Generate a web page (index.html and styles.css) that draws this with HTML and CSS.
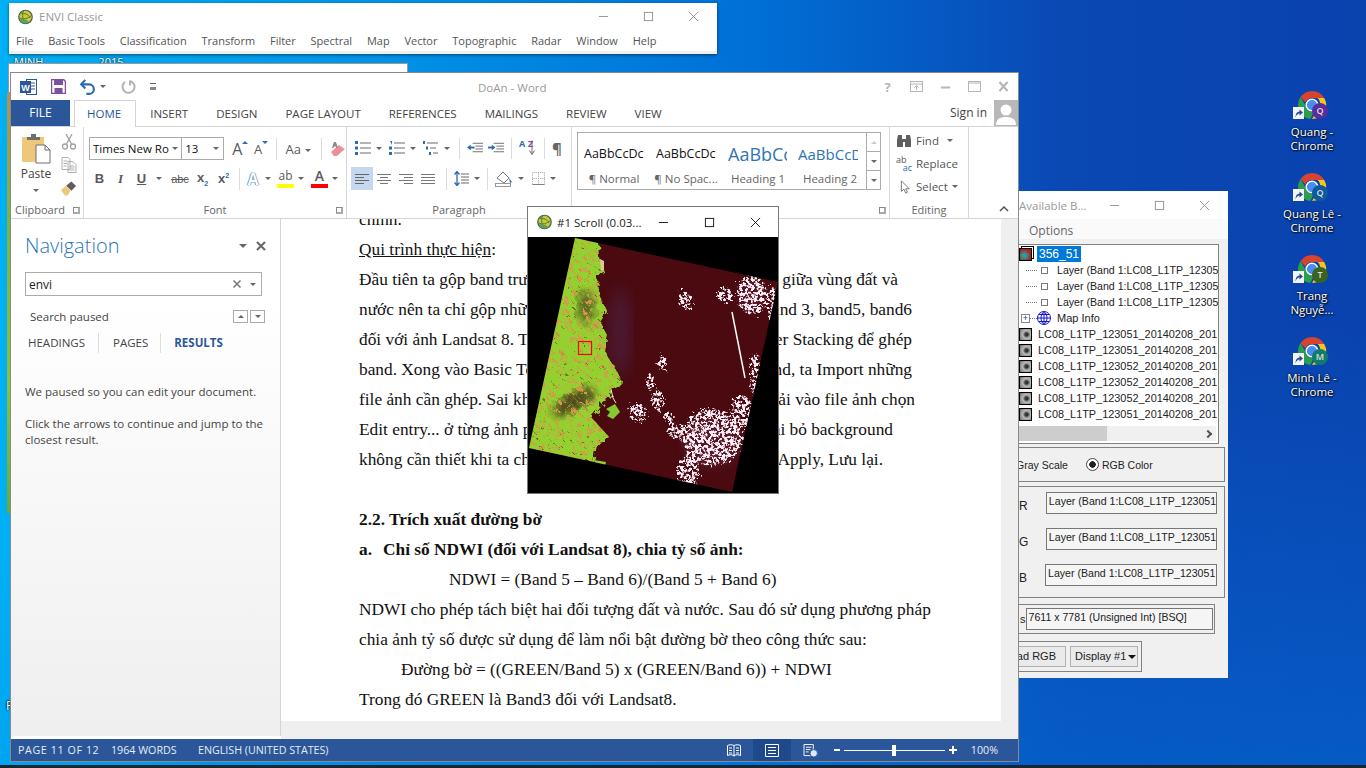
FILE: index.html
```html
<!DOCTYPE html>
<html lang="vi">
<head>
    <meta charset="UTF-8">
    <title>DoAn - Word</title>
    <link rel="stylesheet" href="styles.css">
</head>
<body>
    <svg class="defs" width="0" height="0">
        <defs>
            <symbol id="envi" viewBox="0 0 16 16">
                <circle cx="8" cy="8" r="7.2" fill="#d8c42e" stroke="#3f6a55" stroke-width="1.3"/>
                <path d="M1.5 9c4 2 9 1 13-3M6 1.5c-2 4-1 10 2 13M3 4c4 0 8 1 10 5" fill="none" stroke="#2f7d4c" stroke-width="1"/>
                <path d="M2 10a6.5 6.5 0 0 0 10 3.500l-3-2.500z" fill="#5fa05a"/>
            </symbol>
            <symbol id="chrome" viewBox="0 0 32 32">
                <path d="M16 1a15 15 0 0 1 13 7.500H16a7.500 7.500 0 0 0-7 4.800L3.800 7.500A15 15 0 0 1 16 1z" fill="#d8432f"/>
                <path d="M29 8.500A15 15 0 0 1 16 31l6.500-11.300A7.500 7.500 0 0 0 22 8.500z" fill="#f5c51e"/>
                <path d="M3.800 7.500l6.500 11.300a7.500 7.500 0 0 0 7.600 4.600L14.200 31A15 15 0 0 1 3.800 7.500z" fill="#2c9e4b"/>
                <circle cx="16" cy="16" r="6.200" fill="#4a8df0" stroke="#fff" stroke-width="1.500"/>
            </symbol>
            <symbol id="shortcut" viewBox="0 0 11 12">
                <rect width="11" height="12" fill="#f4f4f4"/>
                <path d="M2.500 10.500c0-4 1.500-6 4-6V2.500L10 5.500l-3.500 3V6.500c-1.500 0-3 1-4 4z" fill="#1f4f8f"/>
            </symbol>
        </defs>
    </svg>

    <div class="behind-text"><span>MINH</span><span>2015</span></div>
    <div class="behind-window"></div>
    <div class="sliver"></div>
    <div class="stray-p">P</div>

    <div class="window envi-main">
        <div class="win-title">
            <svg class="app-ico"><use href="#envi"/></svg>
            <span class="grey-title">ENVI Classic</span>
            <div class="win-btns grey">
                <svg viewBox="0 0 12 12"><path d="M1 6h10" stroke="currentColor"/></svg>
                <svg viewBox="0 0 12 12"><rect x="1.500" y="1.500" width="9" height="9" fill="none" stroke="currentColor"/></svg>
                <svg viewBox="0 0 12 12"><path d="M1 1l10 10M11 1L1 11" stroke="currentColor"/></svg>
            </div>
        </div>
        <div class="envi-menu">
            <span>File</span><span>Basic Tools</span><span>Classification</span><span>Transform</span><span>Filter</span><span>Spectral</span><span>Map</span><span>Vector</span><span>Topographic</span><span>Radar</span><span>Window</span><span>Help</span>
        </div>
    </div>

    <div class="desktop-icons">
        <div class="dicon">
            <div class="dicon-art"><svg class="chrome"><use href="#chrome"/></svg><svg class="short"><use href="#shortcut"/></svg><span class="badge purple">Q</span></div>
            <div class="dicon-label">Quang -<br>Chrome</div>
        </div>
        <div class="dicon">
            <div class="dicon-art"><svg class="chrome"><use href="#chrome"/></svg><svg class="short"><use href="#shortcut"/></svg><span class="badge navy">Q</span></div>
            <div class="dicon-label">Quang Lê -<br>Chrome</div>
        </div>
        <div class="dicon">
            <div class="dicon-art"><svg class="chrome"><use href="#chrome"/></svg><svg class="short"><use href="#shortcut"/></svg><span class="badge olive">T</span></div>
            <div class="dicon-label">Trang<br>Nguyễ...</div>
        </div>
        <div class="dicon">
            <div class="dicon-art"><svg class="chrome"><use href="#chrome"/></svg><svg class="short"><use href="#shortcut"/></svg><span class="badge teal">M</span></div>
            <div class="dicon-label">Minh Lê -<br>Chrome</div>
        </div>
    </div>

    <!-- Available Bands List -->
    <div class="window bands">
        <div class="bands-title">
            <span class="grey-title">Available B...</span>
            <div class="win-btns grey">
                <svg viewBox="0 0 12 12"><path d="M1 6h10" stroke="currentColor"/></svg>
                <svg viewBox="0 0 12 12"><rect x="1.500" y="1.500" width="9" height="9" fill="none" stroke="currentColor"/></svg>
                <svg viewBox="0 0 12 12"><path d="M1 1l10 10M11 1L1 11" stroke="currentColor"/></svg>
            </div>
        </div>
        <div class="bands-menu">Options</div>
        <div class="tree">
            <div class="tree-rows">
                <div class="t-row root"><span class="thumb color"></span><span class="sel">356_51</span></div>
                <div class="t-row sub"><span class="dots"></span><span class="sq"></span><span>Layer (Band 1:LC08_L1TP_12305</span></div>
                <div class="t-row sub"><span class="dots"></span><span class="sq"></span><span>Layer (Band 1:LC08_L1TP_12305</span></div>
                <div class="t-row sub"><span class="dots"></span><span class="sq"></span><span>Layer (Band 1:LC08_L1TP_12305</span></div>
                <div class="t-row info"><span class="plus">+</span><span class="dots short-dots"></span>
                    <svg class="globe" viewBox="0 0 14 14"><circle cx="7" cy="7" r="6.500" fill="#fff" stroke="#1414d0"/><path d="M.5 7h13M7 .5v13M2 3.500h10M2 10.500h10M7 .5c-4 3-4 10 0 13M7 .5c4 3 4 10 0 13" fill="none" stroke="#1414d0"/></svg>
                    <span>Map Info</span></div>
                <div class="t-row lc"><span class="thumb"></span><span>LC08_L1TP_123051_20140208_201</span></div>
                <div class="t-row lc"><span class="thumb"></span><span>LC08_L1TP_123051_20140208_201</span></div>
                <div class="t-row lc"><span class="thumb"></span><span>LC08_L1TP_123052_20140208_201</span></div>
                <div class="t-row lc"><span class="thumb"></span><span>LC08_L1TP_123052_20140208_201</span></div>
                <div class="t-row lc"><span class="thumb"></span><span>LC08_L1TP_123052_20140208_201</span></div>
                <div class="t-row lc"><span class="thumb"></span><span>LC08_L1TP_123051_20140208_201</span></div>
            </div>
            <div class="hscroll"><div class="hthumb"></div><span class="harrow"></span></div>
        </div>
        <div class="group mode">
            <span class="gray-opt">Gray Scale</span>
            <span class="radio"></span>
            <span>RGB Color</span>
        </div>
        <div class="group rgb">
            <div class="rgb-row"><span class="rgb-label">R</span><div class="field">Layer (Band 1:LC08_L1TP_123051</div></div>
            <div class="rgb-row"><span class="rgb-label">G</span><div class="field">Layer (Band 1:LC08_L1TP_123051</div></div>
            <div class="rgb-row last"><span class="rgb-label">B</span><div class="field">Layer (Band 1:LC08_L1TP_123051</div></div>
        </div>
        <div class="group dims"><span class="dims-s">s</span><div class="field dims-field">7611 x 7781 (Unsigned Int) [BSQ]</div></div>
        <div class="group load">
            <div class="push load-btn">ad RGB</div>
            <div class="push disp">Display #1<span class="caret dark"></span></div>
        </div>
    </div>

    <!-- Word -->
    <div class="window word">
        <div class="word-title">
            <div class="qat">
                <svg class="qi" viewBox="0 0 17 16"><rect x="6.500" y=".5" width="10" height="15" fill="#fff" stroke="#2b579a"/><path d="M11 4h4M11 7h4M11 10h4" stroke="#2b579a"/><rect y="2" width="11" height="12" fill="#2b579a"/><text x="5.500" y="11.500" class="qi-w">W</text></svg>
                <svg class="qi save" viewBox="0 0 15 15"><path d="M.5.5h12l2 2v12H.5z" fill="#fff" stroke="#7d4f9e" stroke-width="1.500"/><rect x="3" y="1" width="9" height="5" fill="#7d4f9e"/><rect x="3.500" y="9" width="8" height="5.500" fill="#7d4f9e"/></svg>
                <svg class="qi undo" viewBox="0 0 15 15"><path d="M5 1L1 5l4 4M1.500 5h7a4.500 4.500 0 0 1 0 9H6" fill="none" stroke="#2b6cb0" stroke-width="2"/></svg>
                <span class="caret small"></span>
                <svg class="qi redo" viewBox="0 0 15 15"><path d="M9 1.500a6 6 0 1 1-5 1M9 1v5" fill="none" stroke="#b3b3b3" stroke-width="2"/></svg>
                <span class="qat-more"></span>
            </div>
            <div class="doc-name">DoAn - Word</div>
            <div class="word-btns">
                <span class="help">?</span>
                <svg viewBox="0 0 13 11"><rect x=".5" y=".5" width="12" height="10" fill="none" stroke="#b5b5b5"/><path d="M1 3h11M6.500 9V5M4.500 6.500l2-2 2 2" fill="none" stroke="#b5b5b5"/></svg>
                <svg viewBox="0 0 13 11"><path d="M2 6.500h9" stroke="#b5b5b5" stroke-width="2"/></svg>
                <svg viewBox="0 0 13 11"><path d="M.5.500h12v10H.5zM1 2h11" fill="none" stroke="#b5b5b5" stroke-width="1"/></svg>
                <svg viewBox="0 0 13 11"><path d="M2.500 1l8 9M10.500 1l-8 9" stroke="#b5b5b5" stroke-width="2"/></svg>
            </div>
        </div>
        <div class="word-tabs">
            <div class="file-tab">FILE</div>
            <div class="tab active">HOME</div>
            <div class="tab">INSERT</div>
            <div class="tab">DESIGN</div>
            <div class="tab">PAGE LAYOUT</div>
            <div class="tab">REFERENCES</div>
            <div class="tab">MAILINGS</div>
            <div class="tab">REVIEW</div>
            <div class="tab">VIEW</div>
            <div class="signin">Sign in</div>
            <div class="avatar"><svg viewBox="0 0 24 24"><circle cx="12" cy="9" r="5.500" fill="#fff"/><path d="M2 24c0-6 4-8 10-8s10 2 10 8z" fill="#fff"/></svg></div>
        </div>
        <div class="ribbon">
            <div class="rb-group clipboard">
                <div class="rb-content clip-body">
                    <div class="paste">
                        <svg viewBox="0 0 29 30" class="paste-ico"><rect x="0" y="3" width="22" height="25" rx="1" fill="#efc77b"/><path d="M5 6V3h4V0h5v3h4v3z" fill="#6e6e6e"/><path d="M14 11h9l5 5v13H14z" fill="#fff" stroke="#6e6e6e"/><path d="M23 11v5h5" fill="none" stroke="#6e6e6e"/></svg>
                        <span>Paste</span>
                        <span class="caret small"></span>
                    </div>
                    <div class="clip-side">
                        <svg viewBox="0 0 15 16"><circle cx="3.500" cy="12.500" r="2.500" fill="none" stroke="#a0a0a0" stroke-width="1.300"/><circle cx="11.500" cy="12.500" r="2.500" fill="none" stroke="#a0a0a0" stroke-width="1.300"/><path d="M10.500 0L5 10M4.500 0L10 10" stroke="#a0a0a0" stroke-width="1.300"/></svg>
                        <svg viewBox="0 0 15 16"><path d="M.5.500h6l2 2v10H.5zM6.500 4.500h5l3 3v8h-8z" fill="#fff" stroke="#b0b0b0"/><path d="M2 4h4M2 6.500h4M2 9h3M8 9h5M8 11h5M8 13h5" stroke="#b0b0b0"/></svg>
                        <svg viewBox="0 0 17 16"><path d="M0 10l5-4 5 5-3 5H4z" fill="#efc77b"/><path d="M5.500 5.500L11 1l5 5-5 5z" fill="#5e5e5e"/></svg>
                    </div>
                </div>
                <div class="rb-label clip-label">Clipboard</div><span class="launch"></span>
            </div>
            <div class="rb-group font">
                <div class="rb-rows">
                    <div class="rb-row r1">
                        <div class="combo name">Times New Ro<span class="caret small"></span></div>
                        <div class="combo size">13<span class="caret small"></span></div>
                        <span class="ico wide grow">A<i class="tri up"></i></span>
                        <span class="ico wide shrink">A<i class="tri down"></i></span>
                        <span class="vsep"></span>
                        <span class="ico aa">Aa<span class="caret small"></span></span>
                        <span class="vsep"></span>
                        <svg class="erase" viewBox="0 0 16 16"><path d="M1 11l8-7 6 4-8 7H4z" fill="#ec8e9c"/><path d="M4 1h2l2 6H6.500L6 5.500H4L3.500 7H2z" fill="#8a8a8a"/></svg>
                    </div>
                    <div class="rb-row r2">
                        <span class="ico fmt b">B</span>
                        <span class="ico fmt i">I</span>
                        <span class="ico fmt u">U</span><span class="caret small cs"></span>
                        <span class="ico fmt abc">abc</span>
                        <span class="ico fmt xs">x<sub>2</sub></span>
                        <span class="ico fmt xs">x<sup>2</sup></span>
                        <span class="vsep tall"></span>
                        <span class="ico effect">A</span><span class="caret small cs"></span>
                        <span class="ico hl">ab</span><span class="caret small cs"></span>
                        <span class="ico fc">A</span><span class="caret small cs"></span>
                    </div>
                </div>
                <div class="rb-label">Font</div><span class="launch"></span>
            </div>
            <div class="rb-group para">
                <div class="rb-rows">
                    <div class="rb-row p1">
                        <svg class="pi" viewBox="0 0 16 14"><path d="M5 2h11M5 7h11M5 12h11" stroke="#6a6a6a"/><path d="M0 0h3v3H0zM0 5.500h3v3H0zM0 11h3v3H0z" fill="#2b6cb0"/></svg><span class="caret small"></span>
                        <svg class="pi" viewBox="0 0 16 14"><path d="M5 2h11M5 7h11M5 12h11" stroke="#6a6a6a"/><path d="M1 0h2v4M0 5.500h3v3H0zM0 11h3v3H0z" fill="#2b6cb0"/></svg><span class="caret small"></span>
                        <svg class="pi" viewBox="0 0 16 14"><path d="M4 2h11M7 7h6M10 12h5" stroke="#6a6a6a"/><path d="M0 0h2v3H0zM3 5.500h2v3H3zM6 11h2v3H6z" fill="#2b6cb0"/></svg><span class="caret small"></span>
                        <span class="vsep"></span>
                        <svg class="pi" viewBox="0 0 17 11"><path d="M6 .5h11M9 3.500h8M9 6.500h8M6 9.500h11" stroke="#6a6a6a"/><path d="M0 5l4-3v6z" fill="#2b6cb0"/><path d="M3 5h5" stroke="#2b6cb0" stroke-width="2"/></svg>
                        <svg class="pi" viewBox="0 0 17 11"><path d="M6 .5h11M9 3.500h8M9 6.500h8M6 9.500h11" stroke="#6a6a6a"/><path d="M8 5L4 2v6z" fill="#2b6cb0"/><path d="M0 5h5" stroke="#2b6cb0" stroke-width="2"/></svg>
                        <span class="vsep"></span>
                        <span class="sort"><b>A</b><b class="z">Z</b><svg viewBox="0 0 6 15"><path d="M3 0v13M.5 10L3 14l2.500-4" fill="none" stroke="#6a6a6a"/></svg></span>
                        <span class="vsep"></span>
                        <span class="pilcrow">¶</span>
                    </div>
                    <div class="rb-row p2">
                        <span class="al on"><svg viewBox="0 0 14 10"><path d="M0 .5h14M0 3.500h9M0 6.500h14M0 9.500h9" stroke="#666"/></svg></span>
                        <span class="al"><svg viewBox="0 0 14 10"><path d="M0 .5h14M3 3.500h8M0 6.500h14M3 9.500h8" stroke="#777"/></svg></span>
                        <span class="al"><svg viewBox="0 0 14 10"><path d="M0 .5h14M5 3.500h9M0 6.500h14M5 9.500h9" stroke="#777"/></svg></span>
                        <span class="al"><svg viewBox="0 0 14 10"><path d="M0 .5h14M0 3.500h14M0 6.500h14M0 9.500h14" stroke="#777"/></svg></span>
                        <span class="vsep"></span>
                        <svg class="pi ls" viewBox="0 0 15 15"><path d="M3 1v13M.5 3.500L3 .5l2.500 3M.5 11.500L3 14.500l2.500-3" fill="none" stroke="#2b6cb0" stroke-width="1.300"/><path d="M7 3h8M7 6h8M7 9h8M7 12h8" stroke="#6a6a6a"/></svg><span class="caret small"></span>
                        <span class="vsep"></span>
                        <svg class="pi shade" viewBox="0 0 18 16"><path d="M2 7l6-6 6 6-5 5z" fill="#fff" stroke="#7a7a7a"/><path d="M14 7l3 4-2 1z" fill="#2b6cb0"/><rect x=".5" y="12.500" width="15" height="3" fill="#fff" stroke="#9a9a9a"/></svg><span class="caret small"></span>
                        <svg class="pi borders" viewBox="0 0 14 14"><path d="M.5.500h13v13H.5zM7 .5v13M.5 7h13" fill="none" stroke="#9a9a9a" stroke-dasharray="1 1"/><path d="M.5 13.500h13" stroke="#777"/></svg><span class="caret small"></span>
                    </div>
                </div>
                <div class="rb-label">Paragraph</div><span class="launch para-launch"></span>
            </div>
            <div class="rb-group styles">
                <div class="rb-content gallery-wrap">
                    <div class="gallery">
                        <div class="style-item"><div class="sample">AaBbCcDc</div><div class="sname">¶ Normal</div></div>
                        <div class="style-item"><div class="sample">AaBbCcDc</div><div class="sname">¶ No Spac...</div></div>
                        <div class="style-item"><div class="sample h1">AaBbCc</div><div class="sname">Heading 1</div></div>
                        <div class="style-item"><div class="sample h2">AaBbCcD</div><div class="sname">Heading 2</div></div>
                        <div class="gal-scroll">
                            <span><i class="tri up pale"></i></span>
                            <span><i class="tri down gr"></i></span>
                            <span><i class="tri down gr bar"></i></span>
                        </div>
                    </div>
                </div>
                <div class="rb-label hidden-label">&nbsp;</div>
            </div>
            <div class="rb-group editing">
                <div class="rb-content edit-list">
                    <div class="edit-item"><svg viewBox="0 0 16 14"><path d="M1 6l1-5h4v4h4V1h4l1 5v7h-6V8H7v5H1z" fill="#5f5f5f"/></svg>Find<span class="caret small ml"></span></div>
                    <div class="edit-item"><span class="rep"><b>ab</b><b class="ac">ac</b></span>Replace</div>
                    <div class="edit-item"><svg viewBox="0 0 16 16"><path d="M5 1v12l3-2.500L10 15l2-1-2-4h4z" fill="#fff" stroke="#6a6a6a"/></svg>Select<span class="caret small"></span></div>
                </div>
                <div class="rb-label">Editing</div>
            </div>
            <svg class="collapse" viewBox="0 0 10 6"><path d="M1 5l4-4 4 4" fill="none" stroke="#555" stroke-width="1.500"/></svg>
        </div>
        <div class="word-body">
            <div class="nav">
                <div class="nav-head"><span class="nav-title">Navigation</span><span class="caret nav-caret"></span><svg class="nav-x" viewBox="0 0 10 10"><path d="M1 1l8 8M9 1L1 9" stroke="#666" stroke-width="2"/></svg></div>
                <div class="nav-search"><span>envi</span><svg viewBox="0 0 8 8"><path d="M.5.500l7 7M7.500.500l-7 7" stroke="#777" stroke-width="1.500"/></svg><span class="caret small"></span></div>
                <div class="nav-status"><span>Search paused</span><span class="arrows"><span><i class="tri up gr"></i></span><span><i class="tri down gr"></i></span></span></div>
                <div class="nav-tabs"><span>HEADINGS</span><span>PAGES</span><span class="cur">RESULTS</span></div>
                <p class="nav-msg">We paused so you can edit your document.</p>
                <p class="nav-msg">Click the arrows to continue and jump to the closest result.</p>
            </div>
            <div class="doc-area">
                <div class="page">
                    <div class="line">chính.</div>
                    <div class="line"><u>Qui trình thực hiện</u>:</div>
                    <div class="line split s1"><span>Đầu tiên ta gộp band trước khi tách</span><span>giữa vùng đất và</span></div>
                    <div class="line split s2"><span>nước nên ta chỉ gộp những band cần</span><span>band 3, band5, band6</span></div>
                    <div class="line split s2"><span>đối với ảnh Landsat 8. Trong ENVI</span><span>Layer Stacking để ghép</span></div>
                    <div class="line split s3"><span>band. Xong vào Basic Tools chọn</span><span>Band, ta Import những</span></div>
                    <div class="line split s4"><span>file ảnh cần ghép. Sai khi Import</span><span>phải vào file ảnh chọn</span></div>
                    <div class="line split s5"><span>Edit entry... ở từng ảnh phải chọn</span><span>loại bỏ background</span></div>
                    <div class="line split s6"><span>không cần thiết khi ta chọn xong</span><span>Apply, Lưu lại.</span></div>
                    <div class="line"></div>
                    <div class="line"><b>2.2. Trích xuất đường bờ</b></div>
                    <div class="line bold-item"><b>a.</b><b>Chỉ số NDWI (đối với Landsat 8), chia tỷ số ảnh:</b></div>
                    <div class="line ind-a">NDWI = (Band 5 – Band 6)/(Band 5 + Band 6)</div>
                    <div class="line">NDWI cho phép tách biệt hai đối tượng đất và nước. Sau đó sử dụng phương pháp</div>
                    <div class="line">chia ảnh tỷ số được sử dụng để làm nổi bật đường bờ theo công thức sau:</div>
                    <div class="line ind-b">Đường bờ = ((GREEN/Band 5) x (GREEN/Band 6)) + NDWI</div>
                    <div class="line">Trong đó GREEN là Band3 đối với Landsat8.</div>
                </div>
                <div class="page-gap"></div>
            </div>
        </div>
        <div class="statusbar">
            <span class="st-txt st-page">PAGE 11 OF 12</span>
            <span class="st-txt st-words">1964 WORDS</span>
            <span class="st-txt">ENGLISH (UNITED STATES)</span>
            <div class="st-right">
                <svg class="st-ico" viewBox="0 0 14 13"><path d="M.5 1.500c2-1 4-1 6.500 0 2.500-1 4.500-1 6.500 0v10c-2-1-4-1-6.500 0-2.500-1-4.500-1-6.500 0zM7 1.500v11M2 4h3M2 6.500h3M2 9h3M9 4h3M9 6.500h3M9 9h3" fill="none" stroke="#fff"/></svg>
                <span class="st-print"><svg viewBox="0 0 14 13"><path d="M.5.500h13v12H.5zM3 3.500h8M3 6.500h8M3 9.500h8" fill="none" stroke="#fff"/></svg></span>
                <svg class="st-ico web" viewBox="0 0 15 14"><path d="M.5.500h10v12H.5zM2.500 3.500h6M2.500 6h5M2.500 8.500h3" fill="none" stroke="#fff"/><circle cx="11" cy="10" r="4" fill="#dfe8f5" stroke="#2b579a"/></svg>
                <div class="zoom"><i class="zm"></i><div class="slider"><span class="knob"></span></div><i class="zp"></i></div>
                <span class="st-txt pct">100%</span>
            </div>
        </div>
    </div>

    <!-- #1 Scroll -->
    <div class="window scroll-win">
        <div class="scroll-title">
            <svg class="app-ico"><use href="#envi"/></svg>
            <span>#1 Scroll (0.03...</span>
            <div class="win-btns black">
                <svg viewBox="0 0 12 12"><path d="M1 6h10" stroke="currentColor"/></svg>
                <svg viewBox="0 0 12 12"><rect x="1.500" y="1.500" width="9" height="9" fill="none" stroke="currentColor"/></svg>
                <svg viewBox="0 0 12 12"><path d="M1 1l10 10M11 1L1 11" stroke="currentColor"/></svg>
            </div>
        </div>
        <svg class="scene" viewBox="0 0 250 256">
            <defs>
                <clipPath id="sceneClip"><path d="M47 1L250 45 204 255 1 211z"/></clipPath>
                <clipPath id="landClip"><path d="M30 -6L71 6 72 21 76 35 69 38 70 55 79 75 72 85 79 98 75 111 87 131 94 145 84 155 69 175 64 181 82 201 69 208 66 225 -15 215z"/></clipPath>
                <filter id="orange" x="0" y="0" width="100%" height="100%" color-interpolation-filters="sRGB">
                    <feTurbulence type="fractalNoise" baseFrequency="0.22" numOctaves="3" seed="12"/>
                    <feColorMatrix values="0 0 0 0 .84  0 0 0 0 .6  0 0 0 0 .3  9 0 0 0 -5.100"/>
                </filter>
                <filter id="dark" x="0" y="0" width="100%" height="100%" color-interpolation-filters="sRGB">
                    <feTurbulence type="fractalNoise" baseFrequency="0.3" numOctaves="2" seed="9"/>
                    <feColorMatrix values="0 0 0 0 .4  0 0 0 0 .42  0 0 0 0 .14  0 10 0 0 -6.900"/>
                </filter>
                <filter id="cloud" x="-30%" y="-30%" width="160%" height="160%" color-interpolation-filters="sRGB">
                    <feTurbulence type="fractalNoise" baseFrequency="0.34" numOctaves="3" seed="7" result="n"/>
                    <feDisplacementMap in="SourceGraphic" in2="n" scale="12" result="d"/>
                    <feColorMatrix in="n" values="0 0 0 0 1  0 0 0 0 1  0 0 0 0 1  9 0 0 0 -3.900" result="m"/>
                    <feComposite in="d" in2="m" operator="in"/>
                </filter>
                <filter id="rough" x="-10%" y="-10%" width="120%" height="120%">
                    <feTurbulence type="fractalNoise" baseFrequency="0.16" numOctaves="3" seed="3" result="r"/>
                    <feDisplacementMap in="SourceGraphic" in2="r" scale="9"/>
                </filter>
                <filter id="soft"><feGaussianBlur stdDeviation="8"/></filter>
                <filter id="soft2"><feGaussianBlur stdDeviation="4"/></filter>
            </defs>
            <rect width="250" height="256" fill="#000"/>
            <g clip-path="url(#sceneClip)">
                <rect width="250" height="256" fill="#4a0a10"/>
                <ellipse cx="92" cy="95" rx="11" ry="45" fill="#4f2c58" opacity=".5" filter="url(#soft)"/>
                <g fill="#7a3a50" filter="url(#soft2)" opacity=".3">
                    <ellipse cx="184" cy="205" rx="30" ry="26"/>
                    <ellipse cx="224" cy="58" rx="14" ry="16"/>
                </g>
                <g filter="url(#cloud)" fill="#fbeef8">
                    <ellipse cx="224" cy="58" rx="15" ry="19"/>
                    <ellipse cx="197" cy="58" rx="8" ry="7"/>
                    <ellipse cx="157" cy="63" rx="6" ry="9"/>
                    <ellipse cx="245" cy="70" rx="5" ry="20"/>
                    <ellipse cx="184" cy="200" rx="30" ry="28"/>
                    <ellipse cx="160" cy="235" rx="11" ry="18"/>
                    <ellipse cx="150" cy="195" rx="10" ry="7"/>
                    <ellipse cx="214" cy="175" rx="11" ry="16"/>
                    <ellipse cx="110" cy="176" rx="9" ry="9"/>
                    <ellipse cx="130" cy="163" rx="6" ry="10"/>
                    <ellipse cx="122" cy="145" rx="4" ry="8"/>
                    <ellipse cx="134" cy="126" rx="4" ry="8"/>
                    <ellipse cx="142" cy="181" rx="4" ry="7"/>
                    <ellipse cx="228" cy="140" rx="5" ry="24"/>
                </g>
                <path d="M204 75L217 141" stroke="#fff" stroke-width="1.500"/>
                <g filter="url(#rough)">
                    <g clip-path="url(#landClip)">
                        <rect x="-20" y="-10" width="130" height="270" fill="#93d22f"/>
                        <ellipse cx="58" cy="70" rx="9" ry="17" fill="#5c6a24" filter="url(#soft2)"/>
                        <ellipse cx="46" cy="165" rx="24" ry="9" fill="#4e4a1c" filter="url(#soft2)" transform="rotate(-30 46 165)"/>
                        <rect x="-20" y="-10" width="130" height="270" filter="url(#orange)"/>
                        <rect x="-20" y="-10" width="130" height="270" filter="url(#dark)"/>
                    </g>
                </g>
                <path d="M78 172l9-5 5 8-7 7-6-3 3-4z" fill="#84c832"/>
                <path d="M83 152l2 9 3 5" fill="none" stroke="#f4e8c0"/>
                <path d="M72 22l4 2 0 9-3 1z" fill="#d8c89a"/>
                <path d="M66 223l12 2-1 4-10-2z" fill="#93d22f"/>
            </g>
            <rect class="scene-box" x="50.500" y="104.500" width="13" height="13"/>
        </svg>
    </div>
</body>
</html>
```

FILE: styles.css
```css
* {
    box-sizing: border-box;
}
html, body {
    margin: 0;
    padding: 0;
    width: 1366px;
    height: 768px;
    overflow: hidden;
}
body {
    position: relative;
    font-family: "Open Sans", "Noto Sans", sans-serif;
    font-size: 12px;
    color: #444;
    background:
        linear-gradient(180deg, transparent 765px, #1b2530 765px),
        linear-gradient(170deg, transparent 55%, rgba(0, 120, 225, 0.45) 100%),
        linear-gradient(90deg, #00b0f4 0%, #0090e6 30%, #0070d6 55%, #0a48b4 78%, #0a42ae 100%);
}
.defs {
    position: absolute;
}
.window {
    position: absolute;
    background: #fff;
}
.app-ico {
    width: 15px;
    height: 16px;
    flex: none;
}
.grey-title {
    color: #999;
    white-space: nowrap;
    font-size: 11.500px;
}

/* caption buttons */
.win-btns {
    margin-left: auto;
    display: flex;
    gap: 34px;
}
.win-btns svg {
    width: 11px;
    height: 11px;
    fill: none;
}
.win-btns.grey {
    color: #8f8f8f;
}
.win-btns.black {
    color: #111;
    gap: 35px;
}

/* things behind the main windows */
.behind-text {
    position: absolute;
    left: 14px;
    top: 54px;
    display: flex;
    gap: 55px;
    color: #fff;
    font-size: 11px;
    line-height: 16px;
    text-shadow: 0 0 2px #000;
}
.behind-window {
    position: absolute;
    left: 8px;
    top: 63px;
    width: 400px;
    height: 30px;
    background: #fff;
    border: 1px solid #999;
}
.sliver {
    position: absolute;
    left: 7px;
    top: 93px;
    width: 4px;
    height: 420px;
    background: linear-gradient(180deg, #b98d55, #7fb43a 30%, #8cc13a 70%, #6fa836);
}
.stray-p {
    position: absolute;
    left: 6px;
    top: 697px;
    color: #fff;
    font-size: 12px;
    text-shadow: 0 0 2px #000, 0 0 2px #000;
}

/* ENVI main bar */
.envi-main {
    left: 9px;
    top: 3px;
    width: 708px;
    height: 51px;
    border-bottom: 3px solid #f0f0f0;
    box-shadow: 0 1px 3px rgba(0, 0, 0, 0.5);
}
.win-title {
    height: 27px;
    display: flex;
    align-items: center;
    padding: 0 18px 0 9px;
    gap: 6px;
}
.envi-menu {
    display: flex;
    gap: 14.800px;
    padding-left: 7px;
    line-height: 22px;
    color: #555;
    font-size: 11px;
}

/* desktop icons */
.desktop-icons {
    position: absolute;
    left: 1272px;
    top: 90px;
    width: 80px;
}
.dicon {
    height: 82px;
}
.dicon-art {
    position: relative;
    width: 32px;
    height: 32px;
    margin: 0 auto;
}
.chrome {
    width: 30px;
    height: 30px;
    display: block;
    margin-left: 1px;
}
.short {
    position: absolute;
    left: -3px;
    top: 17px;
    width: 11px;
    height: 12px;
}
.badge {
    position: absolute;
    left: 16px;
    top: 13px;
    width: 16px;
    height: 16px;
    border-radius: 50%;
    color: #ddd;
    font-size: 9px;
    font-weight: 600;
    line-height: 16px;
    text-align: center;
}
.purple { background: #5a2d9c; }
.navy { background: #0f5a9c; }
.olive { background: #3a6320; }
.teal { background: #0e7d6a; }
.dicon-label {
    margin-top: 3px;
    color: #fff;
    text-align: center;
    line-height: 14px;
    font-size: 11.500px;
    text-shadow: 1px 1px 2px #000, 0 0 2px #000;
}

/* Available Bands List */
.bands {
    left: 1010px;
    top: 191px;
    width: 218px;
    height: 487px;
    background: #f0f0f0;
    font-family: "Liberation Sans", sans-serif;
    color: #222;
    font-size: 11px;
}
.bands-title {
    height: 28px;
    background: #fff;
    display: flex;
    align-items: center;
    padding: 0 18px 0 9px;
    font-family: "Open Sans", sans-serif;
}
.bands-menu {
    height: 20px;
    background: #fafafa;
    padding-left: 19px;
    line-height: 24px;
    color: #666;
    font-family: "Open Sans", sans-serif;
    font-size: 12px;
}
.tree {
    margin: 5px 0 0 2px;
    width: 207px;
    height: 200px;
    background: #fff;
    border: 1px solid #828282;
    display: flex;
    flex-direction: column;
}
.tree-rows {
    flex: 1;
    padding-top: 1px;
    overflow: hidden;
}
.t-row {
    height: 16px;
    display: flex;
    align-items: center;
    white-space: nowrap;
    overflow: hidden;
    line-height: 16px;
}
.t-row.sub {
    font-size: 10.600px;
}
.t-row.lc {
    font-size: 10.900px;
}
.thumb {
    flex: none;
    width: 13px;
    height: 13px;
    margin: 0 6px 0 6px;
    border: 1px solid #000;
    background: radial-gradient(circle at 60% 50%, #333 15%, #bbb 45%, #777 90%);
}
.thumb.color {
    background: radial-gradient(circle at 40% 60%, #20a0a0 20%, #c01818 70%);
    box-shadow: 2px -2px 0 -1px #fff, 2px -2px 0 0 #000;
}
.sel {
    margin-left: -1px;
    padding: 0 2px;
    background: #0078d7;
    color: #fff;
    font-size: 12px;
}
.dots {
    flex: none;
    width: 11px;
    margin-left: 13px;
    border-top: 1px dotted #777;
}
.sq {
    flex: none;
    width: 7px;
    height: 7px;
    margin: 0 9px 0 4px;
    border: 1px solid #777;
}
.plus {
    flex: none;
    width: 9px;
    height: 9px;
    margin-left: 8px;
    border: 1px solid #888;
    color: #1c3c90;
    font-size: 9px;
    line-height: 7px;
    text-align: center;
}
.short-dots {
    width: 7px;
    margin: 0;
}
.globe {
    flex: none;
    width: 14px;
    height: 14px;
    margin-right: 6px;
}
.hscroll {
    height: 15px;
    background: #f0f0f0;
    margin: 0 2px 2px 0;
    display: flex;
    align-items: center;
}
.hthumb {
    width: 94px;
    height: 15px;
    background: #cdcdcd;
}
.harrow {
    margin-left: auto;
    margin-right: 5px;
    width: 6px;
    height: 6px;
    border-top: 2px solid #555;
    border-right: 2px solid #555;
    transform: rotate(45deg);
}
.group {
    border: 1px solid #828282;
    border-left: 0;
}
.mode {
    margin-top: 3px;
    width: 215px;
    height: 35px;
    display: flex;
    align-items: center;
    font-size: 10.500px;
}
.gray-opt {
    margin-left: 6px;
}
.radio {
    width: 13px;
    height: 13px;
    margin: 0 3px 0 18px;
    border: 1px solid #444;
    border-radius: 50%;
    background: radial-gradient(circle, #222 0 3px, #fff 3.500px);
}
.rgb {
    margin-top: 4px;
    width: 215px;
    height: 112px;
    padding: 5px 7px 0 9px;
}
.rgb-row {
    display: flex;
    height: 36px;
    align-items: flex-start;
}
.rgb-label {
    width: 27px;
    padding-top: 7px;
    font-size: 12px;
}
.field {
    width: 172px;
    height: 22px;
    border: 1px solid #777;
    background: #f5f5f5;
    padding-left: 2px;
    font-size: 10.600px;
    line-height: 17px;
    white-space: nowrap;
    overflow: hidden;
}
.rgb-row.last .field {
    margin-left: -1px;
}
.dims {
    margin-top: 6px;
    width: 205px;
    height: 30px;
    display: flex;
    align-items: center;
    padding-right: 1px;
}
.dims-s {
    margin-left: 10px;
}
.dims-field {
    width: 188px;
    margin-left: auto;
}
.load {
    margin-top: 7px;
    width: 132px;
    height: 31px;
    display: flex;
    align-items: center;
    padding: 0 3px 0 0;
    gap: 4px;
}
.push {
    height: 21px;
    border: 1px solid #b0b0b0;
    background: #eaeaea;
    line-height: 19px;
    padding: 0 4px;
    white-space: nowrap;
    display: flex;
    align-items: center;
}
.load-btn {
    flex: 1;
    justify-content: flex-end;
    padding-right: 9px;
}
.disp {
    width: 68px;
    flex: none;
}
.caret {
    display: inline-block;
    width: 0;
    height: 0;
    border-left: 4px solid transparent;
    border-right: 4px solid transparent;
    border-top: 4px solid #666;
}
.caret.small {
    border-left-width: 3px;
    border-right-width: 3px;
    border-top-width: 3px;
}
.caret.dark {
    margin-left: 2px;
    border-top-color: #111;
}

/* Word */
.word {
    left: 10px;
    top: 72px;
    width: 1009px;
    height: 690px;
    border: 1px solid #8a8a8a;
    display: flex;
    flex-direction: column;
    color: #444;
}
.word-title {
    height: 27px;
    flex: none;
    position: relative;
    display: flex;
    align-items: center;
}
.qat {
    display: flex;
    align-items: center;
    padding-left: 9px;
}
.qi {
    width: 17px;
    height: 16px;
}
.qi-w {
    fill: #fff;
    font-family: "Liberation Sans", sans-serif;
    font-size: 9px;
    font-weight: 700;
    text-anchor: middle;
}
.qi.save {
    width: 15px;
    height: 15px;
    margin-left: 14px;
}
.qi.undo {
    margin-left: 14px;
    width: 16px;
}
.qat .caret {
    margin-left: 4px;
}
.qi.redo {
    margin-left: 15px;
    width: 15px;
}
.qat-more {
    margin-left: 14px;
    width: 6px;
    height: 7px;
    border-top: 1px solid #666;
    border-bottom: 3px solid #888;
}
.doc-name {
    position: absolute;
    left: 467px;
    top: 7px;
    color: #999;
    font-size: 11.500px;
}
.word-btns {
    margin-left: auto;
    display: flex;
    align-items: center;
    gap: 16px;
    padding-right: 8px;
}
.word-btns svg {
    width: 13px;
    height: 11px;
}
.help {
    color: #b5b5b5;
    font-size: 13px;
    font-weight: 700;
    width: 13px;
    text-align: center;
}
.word-tabs {
    height: 27px;
    flex: none;
    display: flex;
    align-items: stretch;
    border-bottom: 1px solid #d4d4d4;
    color: #444;
}
.file-tab {
    width: 59px;
    background: #2b579a;
    color: #fff;
    text-align: center;
    line-height: 25px;
    margin-right: 4px;
}
.tab {
    padding: 0 13px;
    line-height: 26px;
    border: 1px solid transparent;
    border-bottom: 0;
    font-size: 11.500px;
    white-space: nowrap;
}
.tab.active {
    color: #2b579a;
    background: #fff;
    border-color: #d4d4d4;
    height: 27px;
    padding: 0 14px 0 12px;
}
.signin {
    margin-left: auto;
    line-height: 26px;
    padding-right: 7px;
}
.avatar {
    width: 24px;
    height: 26px;
    background: #b8b8b8;
    overflow: hidden;
}
.avatar svg {
    display: block;
    width: 24px;
    height: 26px;
}
.ribbon {
    height: 92px;
    flex: none;
    position: relative;
    display: flex;
    border-bottom: 1px solid #d4d4d4;
}
.rb-group {
    position: relative;
    display: flex;
    flex-direction: column;
    border-right: 1px solid #d8d8d8;
}
.rb-content, .rb-rows {
    flex: 1;
}
.rb-label {
    height: 16px;
    line-height: 15px;
    text-align: center;
    color: #666;
    font-size: 11px;
}
.clip-label {
    text-align: left;
    padding-left: 4px;
}
.launch {
    position: absolute;
    right: 3px;
    bottom: 4px;
    width: 7px;
    height: 7px;
    border-left: 1px solid #888;
    border-top: 1px solid #888;
    border-right: 2px solid #aaa;
    border-bottom: 2px solid #aaa;
}
.para-launch {
    right: -315px;
}
.clipboard {
    width: 73px;
}
.clip-body {
    display: flex;
    padding-top: 7px;
}
.paste {
    width: 50px;
    display: flex;
    flex-direction: column;
    align-items: center;
    color: #444;
}
.paste-ico {
    width: 29px;
    height: 30px;
}
.paste span:first-of-type {
    line-height: 20px;
}
.paste .caret {
    margin-top: 5px;
}
.clip-side {
    display: flex;
    flex-direction: column;
    gap: 7px;
}
.clip-side svg {
    width: 16px;
    height: 16px;
}
.font {
    width: 263px;
}
.rb-rows {
    display: flex;
    flex-direction: column;
    padding: 10px 0 0 5px;
}
.rb-row {
    display: flex;
    align-items: center;
}
.r1 {
    height: 23px;
}
.r2 {
    height: 21px;
    margin-top: 8px;
}
.combo {
    height: 23px;
    border: 1px solid #ababab;
    color: #111;
    display: flex;
    align-items: center;
    justify-content: space-between;
    padding: 0 3px;
    white-space: nowrap;
    font-size: 11.500px;
}
.combo.name {
    width: 94px;
}
.combo.size {
    width: 43px;
    margin-left: -1px;
    padding-right: 4px;
}
.ico {
    position: relative;
    display: inline-block;
    color: #5a5a5a;
    text-align: center;
}
.tri {
    display: inline-block;
    width: 0;
    height: 0;
    border-left: 3px solid transparent;
    border-right: 3px solid transparent;
}
.tri.up {
    border-bottom: 3px solid #2b6cb0;
}
.tri.down {
    border-top: 3px solid #2b6cb0;
}
.wide {
    width: 21px;
    font-size: 16px;
    line-height: 20px;
}
.wide .tri {
    position: absolute;
    right: 0;
    top: 2px;
}
.grow {
    margin-left: 3px;
}
.shrink {
    font-size: 13px;
}
.vsep {
    width: 1px;
    height: 22px;
    background: #dcdcdc;
    margin: 0 8px;
    flex: none;
}
.vsep.tall {
    margin: 0 5px;
}
.aa {
    font-size: 13px;
    width: 28px;
    white-space: nowrap;
    text-align: left;
}
.aa .caret {
    margin-left: 4px;
    vertical-align: middle;
}
.erase {
    width: 16px;
    height: 16px;
}
.fmt {
    width: 21px;
    font-family: "Liberation Sans", sans-serif;
    font-weight: 700;
    font-size: 13px;
}
.fmt.i {
    font-style: italic;
    font-family: "Liberation Serif", serif;
}
.fmt.u {
    text-decoration: underline;
}
.fmt.abc {
    width: 24px;
    font-size: 11px;
    font-weight: 400;
    text-decoration: line-through;
}
.fmt.xs {
    width: 21px;
}
.fmt sub, .fmt sup {
    font-size: 7px;
    color: #2b6cb0;
}
.cs {
    margin: 0 6px 0 4px;
}
.effect {
    width: 16px;
    font-size: 16px;
    font-weight: 700;
    line-height: 20px;
    color: #fff;
    text-shadow: 0 0 1px #2b6cb0, 0 0 1px #2b6cb0, 0 0 1px #2b6cb0;
}
.hl, .fc {
    width: 17px;
    height: 19px;
    line-height: 14px;
    font-size: 12px;
    border-bottom: 4px solid #ff0;
}
.fc {
    border-bottom-color: #f00;
    font-size: 14px;
    font-weight: 600;
    margin-left: 1px;
}
.para {
    width: 225px;
}
.para .rb-rows {
    padding-left: 4px;
}
.para .caret {
    margin: 0 7px 0 5px;
}
.p1 {
    height: 22px;
    padding-left: 4px;
}
.p2 {
    height: 23px;
    margin-top: 8px;
}
.pi {
    width: 16px;
    height: 14px;
    flex: none;
}
.p1 .vsep {
    margin: 0 7px;
    height: 21px;
}
.p1 .caret + .vsep {
    margin-left: 2px;
}
.p1 .pi + .pi {
    margin-left: 5px;
}
.sort {
    display: inline-flex;
    width: 18px;
    height: 16px;
    position: relative;
    font-size: 9px;
    line-height: 8px;
    color: #2b6cb0;
    flex-wrap: wrap;
}
.sort b {
    width: 9px;
}
.sort .z {
    color: #7d4f9e;
    order: 3;
}
.sort svg {
    position: absolute;
    right: 2px;
    width: 6px;
    height: 16px;
}
.pilcrow {
    font-size: 15px;
    font-weight: 700;
    color: #666;
}
.al {
    width: 22px;
    height: 23px;
    display: flex;
    align-items: center;
    justify-content: center;
}
.al svg {
    width: 14px;
    height: 10px;
}
.al.on {
    background: #c5d8ef;
}
.p2 .vsep {
    margin: 0 7px;
}
.p2 .caret + .vsep {
    margin-left: 0;
}
.p2 .shade + .caret {
    margin-right: 8px;
}
.ls {
    width: 15px;
    height: 15px;
}
.shade {
    width: 18px;
    height: 16px;
}
.borders {
    width: 13px;
    height: 13px;
}
.styles {
    width: 318px;
}
.gallery-wrap {
    padding: 5px 0 0 5px;
}
.gallery {
    width: 304px;
    height: 58px;
    border: 1px solid #ababab;
    display: flex;
    position: relative;
}
.style-item {
    width: 72.500px;
    overflow: hidden;
}
.sample {
    height: 36px;
    line-height: 42px;
    margin-left: 6px;
    color: #111;
    font-size: 12.500px;
    white-space: nowrap;
    overflow: hidden;
    width: 60px;
}
.sample.h1 {
    color: #2e74b5;
    font-size: 18px;
    width: 59px;
}
.sample.h2 {
    color: #2e74b5;
    font-size: 15px;
    margin-left: 4px;
    width: 60px;
}
.sname {
    color: #666;
    line-height: 20px;
    font-size: 11.500px;
    white-space: nowrap;
    text-align: center;
}
.gal-scroll {
    margin-left: auto;
    width: 14px;
    flex: none;
    border-left: 1px solid #ababab;
    display: flex;
    flex-direction: column;
}
.gal-scroll span {
    flex: 1;
    display: flex;
    align-items: center;
    justify-content: center;
    border-bottom: 1px solid #ababab;
}
.gal-scroll span:last-child {
    border-bottom: 0;
}
.tri.pale {
    border-bottom-color: #ccc;
}
.tri.gr {
    border-top-color: #666;
    border-bottom-color: #666;
}
.bar {
    box-shadow: 0 -4px 0 -2px #666;
}
.editing {
    width: 79px;
    border-right: 1px solid #d8d8d8;
}
.edit-list {
    padding: 2px 0 0 6px;
}
.edit-item {
    height: 23px;
    display: flex;
    align-items: center;
    gap: 4px;
    color: #555;
    white-space: nowrap;
    font-size: 11.500px;
}
.edit-item svg {
    width: 16px;
    height: 14px;
    flex: none;
}
.rep {
    width: 16px;
    height: 16px;
    font-size: 9px;
    line-height: 8px;
    flex: none;
}
.rep b {
    display: block;
    font-weight: 400;
}
.rep .ac {
    color: #2b6cb0;
    text-align: right;
}
.ml {
    margin-left: 4px;
}
.collapse {
    position: absolute;
    right: 9px;
    bottom: 6px;
    width: 10px;
    height: 6px;
}
.word-body {
    flex: 1;
    display: flex;
    min-height: 0;
}
.nav {
    width: 270px;
    flex: none;
    padding: 0 14px;
    background: linear-gradient(180deg, #fff 0%, #fff 15%, #efefef 100%);
    border-right: 1px solid #d4d4d4;
    font-size: 11.500px;
    margin-bottom: 3px;
}
.nav-head {
    height: 50px;
    margin-bottom: 3px;
    display: flex;
    align-items: center;
    padding-top: 3px;
}
.nav-title {
    font-size: 20px;
    color: #2e74b5;
    font-weight: 300;
}
.nav-caret {
    margin-left: auto;
}
.nav-x {
    width: 10px;
    height: 10px;
    margin: 0 0 0 9px;
}
.nav-search {
    width: 237px;
    height: 24px;
    border: 1px solid #ababab;
    background: #fff;
    display: flex;
    align-items: center;
    padding: 0 5px 0 3px;
    color: #222;
    font-size: 12px;
}
.nav-search svg {
    width: 8px;
    height: 8px;
    margin: 0 9px 0 auto;
}
.nav-status {
    display: flex;
    align-items: center;
    padding: 0 1px 0 5px;
    height: 20px;
    margin-top: 10px;
    color: #444;
}
.arrows {
    margin-left: auto;
    display: flex;
    gap: 2px;
}
.arrows span {
    width: 15px;
    height: 13px;
    border: 1px solid #aaa;
    display: flex;
    align-items: center;
    justify-content: center;
}
.nav-tabs {
    display: flex;
    align-items: center;
    height: 20px;
    margin-top: 7px;
    padding-left: 3px;
    font-size: 11.500px;
}
.nav-tabs span {
    padding-right: 13px;
    margin-right: 14px;
    border-right: 1px solid #ddd;
    line-height: 20px;
}
.nav-tabs span + span {
    padding-right: 12px;
    margin-right: 13px;
}
.nav-tabs .cur {
    color: #2b579a;
    font-weight: 700;
    border: 0;
}
.nav-msg {
    margin: 0 0 16px;
    line-height: 16px;
    font-size: 11.500px;
}
.nav-tabs + .nav-msg {
    margin-top: 31px;
}
.doc-area {
    flex: 1;
    background: #efefef;
    overflow: hidden;
    padding-right: 17px;
}
.page {
    height: 502px;
    background: #fff;
    padding-left: 78px;
    overflow: hidden;
    font-family: "Liberation Serif", "Times New Roman", serif;
    color: #111;
    font-size: 17.330px;
}
.line {
    height: 30px;
    line-height: 30px;
    white-space: nowrap;
}
.line:first-child {
    margin-top: -14px;
}
.split {
    display: flex;
    justify-content: space-between;
}
.s1 { width: 539px; }
.s2 { width: 553px; }
.s3 { width: 553px; }
.s4 { width: 556px; }
.s5 { width: 534px; }
.s6 { width: 524px; }
.bold-item {
    display: flex;
    gap: 11px;
}
.ind-a {
    padding-left: 90px;
}
.ind-b {
    padding-left: 42px;
}
.statusbar {
    height: 22px;
    flex: none;
    background: #2b579a;
    color: #fff;
    display: flex;
    align-items: center;
    padding-left: 7px;
}
.st-txt {
    font-size: 10.700px;
    color: #e6ecf5;
    white-space: nowrap;
}
.st-page {
    width: 93px;
    letter-spacing: 0.6px;
}
.st-words {
    width: 87px;
}
.st-right {
    margin-left: auto;
    display: flex;
    align-items: center;
    padding-right: 20px;
}
.st-ico {
    width: 14px;
    height: 13px;
}
.st-print {
    width: 38px;
    height: 22px;
    background: #1e4a8b;
    margin: 0 12px;
    display: flex;
    align-items: center;
    justify-content: center;
}
.st-print svg {
    width: 14px;
    height: 13px;
}
.web {
    width: 15px;
}
.zoom {
    display: flex;
    align-items: center;
    margin: 0 14px 0 16px;
}
.zm {
    width: 6px;
    height: 2px;
    background: #fff;
}
.zp {
    width: 8px;
    height: 8px;
    background:
        linear-gradient(#fff, #fff) center / 8px 2px no-repeat,
        linear-gradient(#fff, #fff) center / 2px 8px no-repeat;
}
.slider {
    position: relative;
    width: 101px;
    height: 1px;
    margin: 0 4px;
    background: #fff;
}
.knob {
    position: absolute;
    left: 48px;
    top: -5px;
    width: 4px;
    height: 11px;
    background: #fff;
}

/* scroll window */
.scroll-win {
    left: 527px;
    top: 206px;
    width: 252px;
    height: 288px;
    border: 1px solid #777;
    display: flex;
    flex-direction: column;
}
.scroll-title {
    height: 30px;
    flex: none;
    display: flex;
    align-items: center;
    padding: 0 17px 0 9px;
    gap: 5px;
    color: #222;
    font-size: 11.500px;
    white-space: nowrap;
}
.scene {
    width: 250px;
    height: 256px;
    display: block;
}
.scene-box {
    fill: none;
    stroke: #f00;
    stroke-width: 1.200;
}
```
